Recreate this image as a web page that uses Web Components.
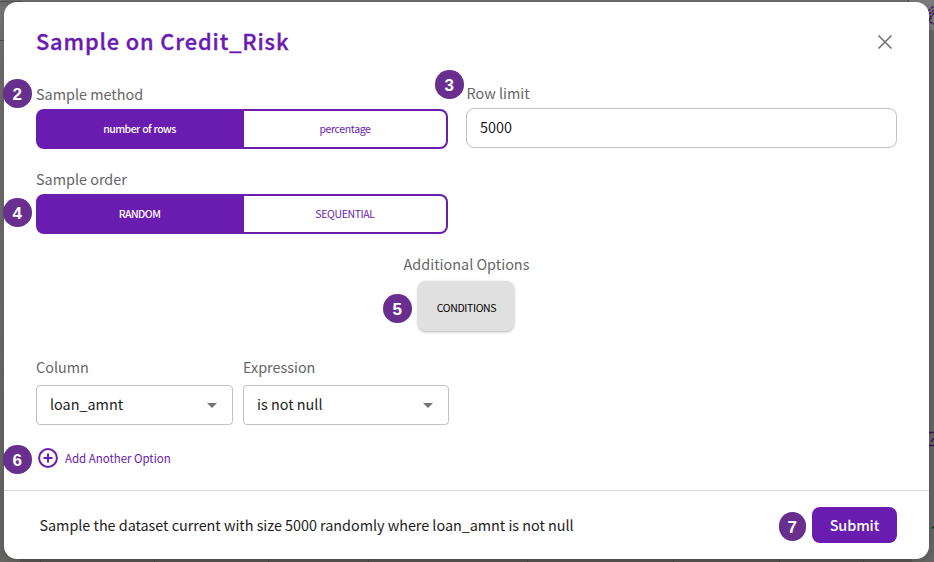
<!DOCTYPE html>
<html lang="en"><head><meta charset="utf-8"><title>Sample on Credit_Risk</title>
<style>
body{margin:0;background:#676665;font-family:"Noto Sans CJK SC","Noto Sans",sans-serif}
</style></head><body>
<sample-dialog></sample-dialog>
<script>
const define=(name,html)=>{
  const t=document.createElement('template');t.innerHTML=html;
  customElements.define(name,class extends HTMLElement{
    constructor(){super();this.attachShadow({mode:'open'}).append(t.content.cloneNode(true))}
  });
};
define('page-backdrop',`<style>:host{display:block;position:absolute;inset:0}svg{display:block}</style>
<svg width="934" height="562" viewBox="0 0 934 562">
<defs><linearGradient id="l" x2="0" y2="1"><stop offset="0" stop-color="#787878"/><stop offset=".12" stop-color="#6f6e6d"/><stop offset="1" stop-color="#686664"/></linearGradient></defs>
<path fill="url(#l)" d="M0 0H20V562H0z"/><path fill="#6d6d6d" d="M0 0H934V6H0z"/><path fill="#7b7b7b" d="M908 0H934V30H908z"/><path fill="#666" d="M920 30H934V562H920z"/>
<path fill="#5b5857" d="M20 555H912V562H20z"/><path d="M0 1.5H22M0 40.5H5" stroke="#515151"/>
<path d="M40.5 555V562M154.5 555V562M268.5 555V562M368.5 555V562M527.5 555V562M673.5 555V562M779.5 555V562M863.5 555V562M908.5 0V6" stroke="#4b4949"/>
<g fill="none" stroke="#40105f" stroke-width="1.5"><path d="M928 11L934 6M929 14L934 10M929 18L930 22L934 24M931 16V20M934 13L930 17" stroke-dasharray="3 1"/><path d="M928 432.5H934M928 445.5H934M931 442L934 438"/></g>
<path d="M932 527.5H934" stroke="#173b20" stroke-width="2"/>
</svg>`);
define('step-badge',`<style>:host{position:absolute;box-sizing:border-box;width:28.5px;height:28.5px;border-radius:50%;background:#682f8e;color:#fff;font:bold 17px/31px "Liberation Sans",sans-serif;text-align:center}</style><slot></slot>`);
define('form-field',`<style>:host{display:flex;flex-direction:column;gap:5px}.label{font-size:14.4px;line-height:20px;color:#666;white-space:nowrap}</style><div class="label"><slot name="label"></slot></div><slot></slot>`);
define('segment-toggle',`<style>:host{display:grid;grid-template-columns:208px 1fr;height:40px;border-radius:8px;overflow:hidden;font-size:10.5px;text-align:center;color:#6a1bb0;background:#6a1bb0}
.on{color:#fff;font-weight:500;line-height:40px;letter-spacing:-.55px;word-spacing:.6px;padding-right:1px}.off{margin:2px 2px 2px 0;line-height:36px;border-radius:0 6px 6px 0;background:#fff;letter-spacing:-.37px}</style><div class="on"><slot name="on"></slot></div><div class="off"><slot name="off"></slot></div>`);
define('text-box',`<style>:host{display:block;box-sizing:border-box;height:40px;padding-left:13px;border:1px solid #c1c1c1;border-radius:8px;font-size:14.4px;line-height:36px;color:#1d1d1d}</style><slot></slot>`);
define('select-box',`<style>:host{display:flex;align-items:center;justify-content:space-between;box-sizing:border-box;height:40px;padding:0 15px 0 13px;border:1px solid #c1c1c1;border-radius:4px;font-size:14.4px;line-height:36px;color:#1d1d1d}span{height:38px}svg{display:block;margin-top:1px}</style><span><slot></slot></span><svg width="10" height="5"><path d="M0 0H10L5 5z" fill="#757575"/></svg>`);
define('option-button',`<style>:host{display:block;width:96px;height:50px;margin-bottom:1px;border-radius:8px;background:#e0e0e0;box-shadow:0 1px 3px #0000004d;font-size:10.5px;line-height:54px;letter-spacing:-.36px;text-align:center;color:#000}</style><slot></slot>`);
define('add-link',`<style>:host{display:flex;align-items:center;gap:7px;font-size:11.5px;line-height:20px;letter-spacing:-.03px;color:#6a1bb0}svg{display:block}</style><svg width="20" height="20" fill="none" stroke="#6a1bb0" stroke-width="2"><circle cx="10" cy="10" r="8.9"/><path d="M10 5.5V14.5M5.5 10H14.5"/></svg><span><slot></slot></span>`);
define('submit-button',`<style>:host{display:block;width:85px;height:36px;border-radius:8px;background:#6a1bb0;color:#fff;font-size:14.4px;font-weight:500;line-height:36px;letter-spacing:-.1px;text-align:center}</style><slot></slot>`);
define('sample-dialog',`<style>
:host{display:flow-root;position:relative;width:934px;height:562px;overflow:hidden}
.modal{position:relative;display:flex;flex-direction:column;box-sizing:border-box;width:925px;height:557px;margin:2px 0 0 4px;background:#fff;border-radius:13px;box-shadow:0 2px 8px #0003}
header{display:flex;justify-content:space-between;align-items:center;height:40px;padding:20px 36px 0 32px}
h1{margin:0;font-size:21.8px;line-height:38px;height:40px;font-weight:500;letter-spacing:.86px;-webkit-text-stroke:.35px #6a1bb0;color:#6a1bb0;white-space:nowrap}
main{flex:1;display:flex;flex-direction:column;padding:22px 32px 0}
.top{display:grid;grid-template-columns:412px 431px;gap:18px}.limit{margin-top:-1px}.limit [slot]{padding-left:.6px}
.order{width:412px;margin-top:20px}.extra{align-self:center;align-items:center;margin-top:20px;gap:7px}
.filters{display:grid;grid-template-columns:197px 206px;gap:10px;margin-top:25px}
.filters form-field{gap:8px}
add-link{margin:23px 0 0 2px}
footer{display:flex;align-items:center;justify-content:space-between;box-sizing:border-box;height:69px;padding:0 32px 0 35.5px;border-top:1px solid #ddd;font-size:14.4px;color:#1d1d1d}
.summary{letter-spacing:-.03px;white-space:nowrap;padding-bottom:2px}
</style>
<page-backdrop></page-backdrop>
<div class="modal">
<header><h1>Sample on Credit_Risk</h1><svg width="16" height="16" fill="none" stroke="#727272" stroke-width="1.6"><path d="M1.5 1.5L14.5 14.5M14.5 1.5L1.5 14.5"/></svg></header>
<main>
<div class="top">
<form-field><span slot="label">Sample method</span><segment-toggle><span slot="on">number of rows</span><span slot="off">percentage</span></segment-toggle></form-field>
<form-field class="limit"><span slot="label">Row limit</span><text-box>5000</text-box></form-field>
</div>
<form-field class="order"><span slot="label">Sample order</span><segment-toggle><span slot="on">RANDOM</span><span slot="off">SEQUENTIAL</span></segment-toggle></form-field>
<form-field class="extra"><span slot="label">Additional Options</span><option-button>CONDITIONS</option-button></form-field>
<div class="filters">
<form-field><span slot="label">Column</span><select-box>loan_amnt</select-box></form-field>
<form-field><span slot="label">Expression</span><select-box>is not null</select-box></form-field>
</div>
<add-link>Add Another Option</add-link>
</main>
<footer><span class="summary">Sample the dataset current with size 5000 randomly where loan_amnt is not null</span><submit-button>Submit</submit-button></footer>
</div>
<step-badge style="left:3px;top:79px">2</step-badge>
<step-badge style="left:435px;top:70px">3</step-badge>
<step-badge style="left:3px;top:198px">4</step-badge>
<step-badge style="left:383px;top:294px">5</step-badge>
<step-badge style="left:3px;top:445px">6</step-badge>
<step-badge style="left:778.5px;top:512px;width:27.5px">7</step-badge>`);
</script></body></html>
